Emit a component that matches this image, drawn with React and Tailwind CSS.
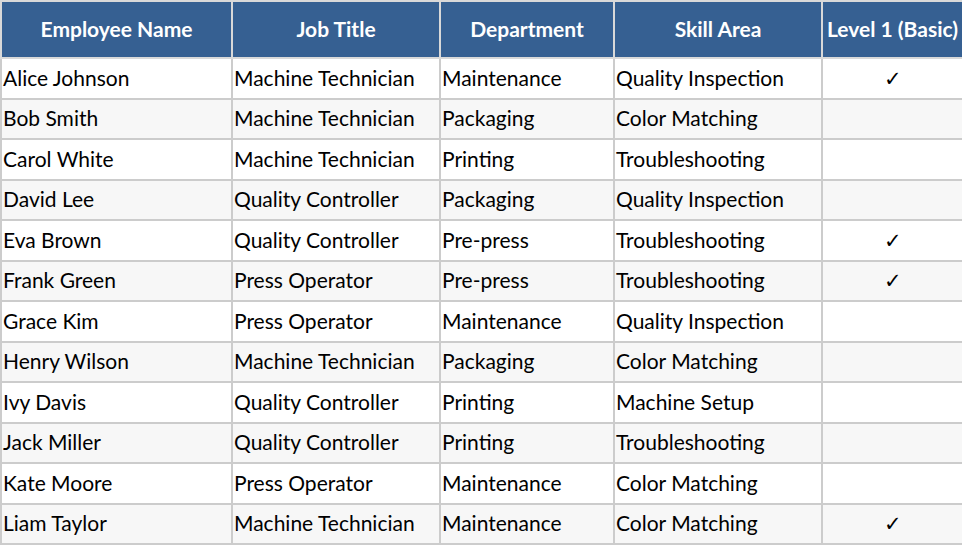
const rows = [
  ['Alice Johnson', 'Machine Technician', 'Maintenance', 'Quality Inspection', true],
  ['Bob Smith', 'Machine Technician', 'Packaging', 'Color Matching', false],
  ['Carol White', 'Machine Technician', 'Printing', 'Troubleshooting', false],
  ['David Lee', 'Quality Controller', 'Packaging', 'Quality Inspection', false],
  ['Eva Brown', 'Quality Controller', 'Pre-press', 'Troubleshooting', true],
  ['Frank Green', 'Press Operator', 'Pre-press', 'Troubleshooting', true],
  ['Grace Kim', 'Press Operator', 'Maintenance', 'Quality Inspection', false],
  ['Henry Wilson', 'Machine Technician', 'Packaging', 'Color Matching', false],
  ['Ivy Davis', 'Quality Controller', 'Printing', 'Machine Setup', false],
  ['Jack Miller', 'Quality Controller', 'Printing', 'Troubleshooting', false],
  ['Kate Moore', 'Press Operator', 'Maintenance', 'Color Matching', false],
  ['Liam Taylor', 'Machine Technician', 'Maintenance', 'Color Matching', true],
]

const headers = ['Employee Name', 'Job Title', 'Department', 'Skill Area', 'Level 1 (Basic)']
const widths = ['w-[231px]', 'w-[208px]', 'w-[174px]', 'w-[208px]', 'w-[141px]']

export default function App() {
  return (
    <div className="w-[962px] bg-white" style={{ fontFamily: 'Lato, "Noto Sans", sans-serif' }}>
      <table className="w-[962px] table-fixed border-collapse text-[21px] text-black">
        <thead>
          <tr className="h-[57px]">
            {headers.map((h, i) => (
              <th
                key={h}
                className={`${widths[i]} bg-[#366092] text-white font-bold text-[21px] text-center border-2 border-[#d9d9d9] whitespace-nowrap px-0 pb-[2px]`}
              >
                {h}
              </th>
            ))}
          </tr>
        </thead>
        <tbody>
          {rows.map((r, idx) => (
            <tr key={r[0]} className={`h-[40.5px] ${idx % 2 === 1 ? 'bg-[#f7f7f7]' : 'bg-white'}`}>
              <td className="border-2 border-[#cccccc] pl-[1px] pb-[2px] whitespace-nowrap">{r[0]}</td>
              <td className="border-2 border-[#cccccc] pl-[1px] pb-[2px] whitespace-nowrap">{r[1]}</td>
              <td className="border-2 border-[#cccccc] pl-[1px] pb-[2px] whitespace-nowrap">{r[2]}</td>
              <td className="border-2 border-[#cccccc] pl-[1px] pb-[2px] whitespace-nowrap">{r[3]}</td>
              <td className="border-2 border-[#cccccc] pb-[2px] text-center">{r[4] ? '✓' : ''}</td>
            </tr>
          ))}
        </tbody>
      </table>
    </div>
  )
}
